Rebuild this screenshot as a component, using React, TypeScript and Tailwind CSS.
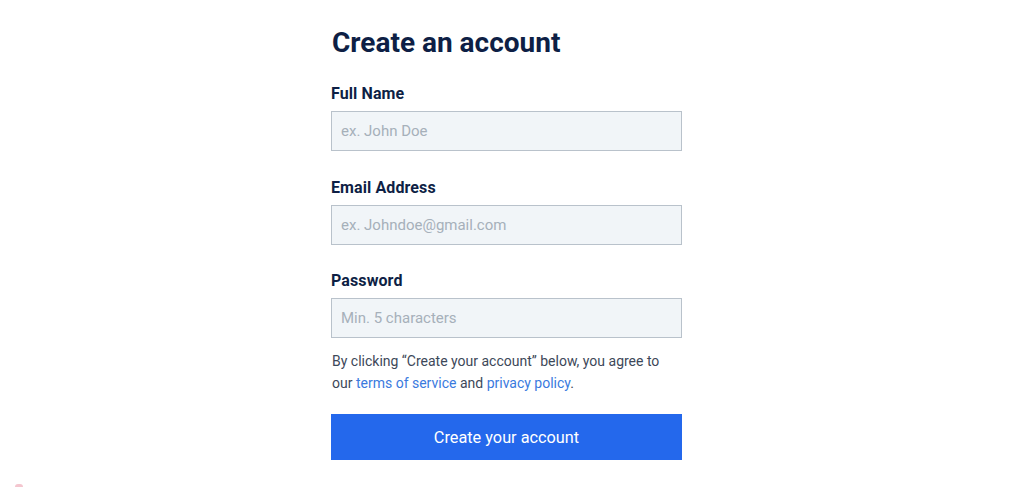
import React from "react";

function Field({ label, placeholder, type = "text" }: { label: string; placeholder: string; type?: string }) {
  return (
    <div className="flex flex-col">
      <label className="text-[16px] leading-[20px] font-bold text-[#0e1f45] tracking-[0.1px]">{label}</label>
      <input
        type={type}
        placeholder={placeholder}
        className="mt-[7px] h-[40px] w-full border border-[#b9c2cb] bg-[#f1f5f8] px-[9px] text-[15px] text-[#0e1f45] placeholder:text-[#a6b0ba] outline-none"
      />
    </div>
  );
}

export default function App() {
  return (
    <div className="relative h-[487px] w-[1014px] overflow-hidden bg-white" style={{ fontFamily: "Roboto, 'Liberation Sans', sans-serif" }}>
      <div className="ml-[331px] w-[351px] pt-[25px]">
        <h1 className="text-[28px] leading-[35px] font-bold text-[#0e1f45] pl-[1px]">Create an account</h1>
        <div className="mt-[24px] flex flex-col gap-[26.5px]">
          <Field label="Full Name" placeholder="ex. John Doe" />
          <Field label="Email Address" placeholder="ex. Johndoe@gmail.com" type="email" />
          <Field label="Password" placeholder="Min. 5 characters" type="password" />
        </div>
        <p className="mt-[12px] text-[14px] leading-[22px] text-[#3d4859] pl-[1px]">
          By clicking “Create your account” below, you agree to
          <br />
          our <span className="text-[#3a7ade]">terms of service</span> and{" "}
          <span className="text-[#3a7ade]">privacy policy</span>.
        </p>
        <button className="mt-[20px] h-[46px] w-full bg-[#2468ec] pt-[3px] text-[16.3px] text-white">
          Create your account
        </button>
      </div>
      <div className="absolute left-[15px] top-[484px] h-[3px] w-[8px] rounded-t-full bg-[#f4c6cf]" />
    </div>
  );
}
